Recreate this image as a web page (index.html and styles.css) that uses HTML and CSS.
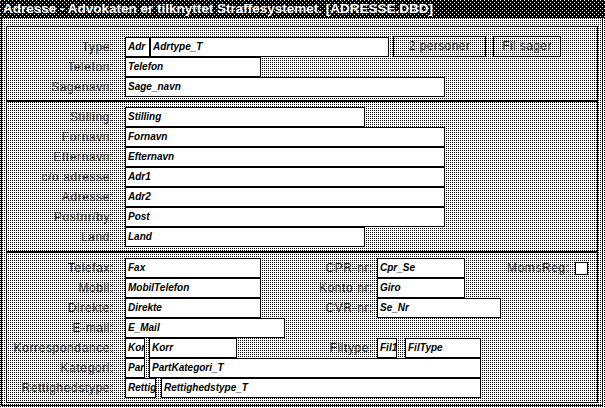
FILE: index.html
```html
<!DOCTYPE html>
<html>
<head>
<meta charset="utf-8">
<title>Adresse</title>
<link rel="stylesheet" href="styles.css">
</head>
<body>
<div class="app">
  <div class="titlebar">Adresse - Advokaten er tilknyttet Straffesystemet. [ADRESSE.DBD]</div>
  <div class="win">
    <div class="frame">
      <section class="sec sec1">
        <div class="row">
          <span class="lbl">Type:</span>
          <div class="fld w25">Adr</div>
          <div class="fld w239">Adrtype_T</div>
          <div class="btn b1">2 personer</div>
          <div class="btn b2">Fil sager</div>
        </div>
        <div class="row">
          <span class="lbl">Telefon:</span>
          <div class="fld w136">Telefon</div>
        </div>
        <div class="row">
          <span class="lbl">Sagenavn:</span>
          <div class="fld w320">Sage_navn</div>
        </div>
      </section>
      <section class="sec sec2">
        <div class="row"><span class="lbl">Stilling:</span><div class="fld w240">Stilling</div></div>
        <div class="row"><span class="lbl">Fornavn:</span><div class="fld w320">Fornavn</div></div>
        <div class="row"><span class="lbl">Efternavn:</span><div class="fld w320">Efternavn</div></div>
        <div class="row"><span class="lbl">c/o adresse:</span><div class="fld w320">Adr1</div></div>
        <div class="row"><span class="lbl">Adresse:</span><div class="fld w320">Adr2</div></div>
        <div class="row"><span class="lbl">Postnr/by:</span><div class="fld w320">Post</div></div>
        <div class="row"><span class="lbl">Land:</span><div class="fld w240">Land</div></div>
      </section>
      <section class="sec sec3">
        <div class="row">
          <div class="left"><span class="lbl">Telefax:</span><div class="fld w136">Fax</div></div>
          <span class="lbl rl">CPR-nr:</span><div class="fld w88">Cpr_Se</div>
          <span class="lbl moms">MomsReg:</span><span class="chk"></span>
        </div>
        <div class="row">
          <div class="left"><span class="lbl">Mobil:</span><div class="fld w136">MobilTelefon</div></div>
          <span class="lbl rl">Konto nr:</span><div class="fld w88">Giro</div>
        </div>
        <div class="row">
          <div class="left"><span class="lbl">Direkte:</span><div class="fld w136">Direkte</div></div>
          <span class="lbl rl">CVR-nr:</span><div class="fld w124">Se_Nr</div>
        </div>
        <div class="row">
          <div class="left"><span class="lbl">E-mail:</span><div class="fld w160">E_Mail</div></div>
        </div>
        <div class="row">
          <div class="left"><span class="lbl">Korrespondance:</span><div class="fld w20">Kor</div><div class="fld w88 g4">Korr</div></div>
          <span class="lbl rl">Filtype:</span><div class="fld w20">Fil1</div><div class="fld w76 g8">FilType</div>
        </div>
        <div class="row">
          <span class="lbl">Kategori:</span><div class="fld w20">Par</div><div class="fld w332 g4">PartKategori_T</div>
        </div>
        <div class="row">
          <span class="lbl">Rettighedstype:</span><div class="fld w31">Rettig</div><div class="fld w320 g5">Rettighedstype_T</div>
        </div>
      </section>
    </div>
  </div>
</div>
</body>
</html>
```
FILE: styles.css
```css
* { box-sizing: border-box; margin: 0; padding: 0; }
html, body { width: 605px; height: 408px; overflow: hidden; }
body {
  background: #bfbfbf url("data:image/svg+xml,%3Csvg xmlns='http://www.w3.org/2000/svg' width='2' height='2' shape-rendering='crispEdges'%3E%3Crect width='2' height='2' fill='%23fff'/%3E%3Crect width='1' height='1' fill='%23000'/%3E%3C/svg%3E") 0 0 / 2px 2px repeat;
  font-family: "Liberation Sans", Arial, sans-serif;
}
.app { height: 408px; }
.titlebar {
  height: 18px;
  padding-left: 3px;
  background: #000 url("data:image/svg+xml,%3Csvg xmlns='http://www.w3.org/2000/svg' width='4' height='4' shape-rendering='crispEdges'%3E%3Crect width='4' height='4' fill='%23000'/%3E%3Crect width='1' height='1' fill='%23fff'/%3E%3Crect x='2' y='2' width='1' height='1' fill='%23fff'/%3E%3C/svg%3E") 0 0 / 4px 4px repeat;
  color: #fff;
  font-size: 13.5px;
  font-weight: bold;
  line-height: 18px;
  white-space: nowrap;
}
.win {
  margin-left: 1px;
  width: 602px;
  height: 388px;
  border-left: 1px solid #000;
  border-right: 1px solid #000;
  border-bottom: 1px solid #000;
  padding: 8px 0 0 4px;
}
.frame {
  width: 592px;
  height: 377px;
  border: 1px solid #000;
}
.sec1 { height: 73px; padding-top: 10px; }
.sec2, .sec3 { height: 151px; border-top: 2px solid #000; padding-top: 5px; }
.row { display: flex; height: 20px; }
.left { display: flex; width: 293px; flex: none; }
.lbl {
  flex: none;
  width: 118px;
  padding-right: 11px;
  text-align: right;
  color: #333;
  font-size: 12px;
  letter-spacing: 0.6px;
  line-height: 20px;
  white-space: nowrap;
}
.rl { width: 77px; padding-right: 4px; }
.moms { width: auto; padding-right: 3px; margin-left: 42px; }
.chk {
  width: 13px; height: 13px; margin-top: 4px; margin-left: 2px;
  background: #fff; border: 1px solid #000;
}
.fld {
  flex: none;
  height: 20px;
  background: #fff;
  border: 1px solid #000;
  padding: 1px 2px;
  font: italic bold 10px/16px "Liberation Sans", Arial, sans-serif;
  color: #000;
  overflow: hidden;
  white-space: nowrap;
}
.w20 { width: 20px; }
.w25 { width: 25px; }
.w31 { width: 31px; }
.w76 { width: 76px; }
.w88 { width: 88px; }
.w124 { width: 124px; }
.w136 { width: 136px; }
.w160 { width: 160px; }
.w239 { width: 239px; }
.w240 { width: 240px; }
.w320 { width: 320px; }
.w332 { width: 332px; }
.g4 { margin-left: 4px; }
.g5 { margin-left: 5px; }
.g8 { margin-left: 8px; }
.btn {
  flex: none;
  height: 21px;
  margin-top: -1px;
  border: 1px solid #000;
  color: #333;
  font-size: 12px;
  letter-spacing: 0.4px;
  line-height: 19px;
  text-align: center;
}
.b1 { width: 93px; margin-left: 4px; }
.b2 { width: 68px; margin-left: 7px; }
```
